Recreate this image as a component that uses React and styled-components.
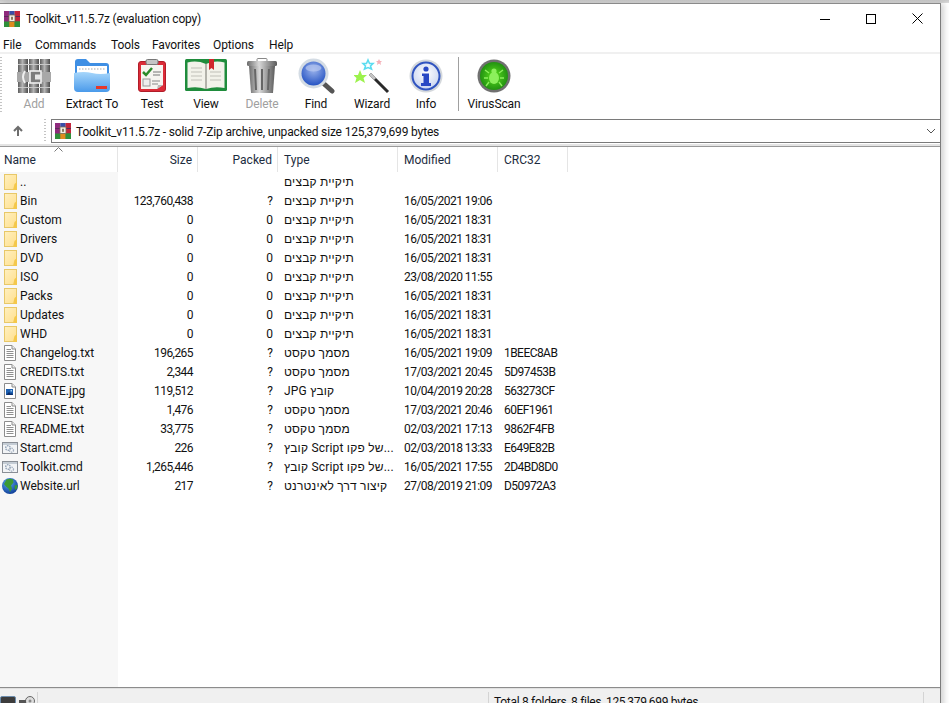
import React from 'react';
import styled, { createGlobalStyle } from 'styled-components';

const GlobalStyle = createGlobalStyle`
    html, body {
        margin: 0;
        height: 100%;
        overflow: hidden;
        background: #fff;
    }
    body {
        font-family: Roboto, "Liberation Sans", "DejaVu Sans", sans-serif;
        font-size: 12px;
        color: #111;
    }
`;

const COLUMNS = '118px 80px 80px 120px 100px 70px';

const rows = [
    { icon: 'folder', name: '..', type: 'תיקיית קבצים' },
    { icon: 'folder', name: 'Bin', size: '123,760,438', packed: '?', type: 'תיקיית קבצים', modified: '16/05/2021 19:06' },
    { icon: 'folder', name: 'Custom', size: '0', packed: '0', type: 'תיקיית קבצים', modified: '16/05/2021 18:31' },
    { icon: 'folder', name: 'Drivers', size: '0', packed: '0', type: 'תיקיית קבצים', modified: '16/05/2021 18:31' },
    { icon: 'folder', name: 'DVD', size: '0', packed: '0', type: 'תיקיית קבצים', modified: '16/05/2021 18:31' },
    { icon: 'folder', name: 'ISO', size: '0', packed: '0', type: 'תיקיית קבצים', modified: '23/08/2020 11:55' },
    { icon: 'folder', name: 'Packs', size: '0', packed: '0', type: 'תיקיית קבצים', modified: '16/05/2021 18:31' },
    { icon: 'folder', name: 'Updates', size: '0', packed: '0', type: 'תיקיית קבצים', modified: '16/05/2021 18:31' },
    { icon: 'folder', name: 'WHD', size: '0', packed: '0', type: 'תיקיית קבצים', modified: '16/05/2021 18:31' },
    { icon: 'text', name: 'Changelog.txt', size: '196,265', packed: '?', type: 'מסמך טקסט', modified: '16/05/2021 19:09', crc: '1BEEC8AB' },
    { icon: 'text', name: 'CREDITS.txt', size: '2,344', packed: '?', type: 'מסמך טקסט', modified: '17/03/2021 20:45', crc: '5D97453B' },
    { icon: 'image', name: 'DONATE.jpg', size: '119,512', packed: '?', type: 'קובץ JPG', modified: '10/04/2019 20:28', crc: '563273CF' },
    { icon: 'text', name: 'LICENSE.txt', size: '1,476', packed: '?', type: 'מסמך טקסט', modified: '17/03/2021 20:46', crc: '60EF1961' },
    { icon: 'text', name: 'README.txt', size: '33,775', packed: '?', type: 'מסמך טקסט', modified: '02/03/2021 17:13', crc: '9862F4FB' },
    { icon: 'cmd', name: 'Start.cmd', size: '226', packed: '?', type: '...של פקו Script קובץ', modified: '02/03/2018 13:33', crc: 'E649E82B' },
    { icon: 'cmd', name: 'Toolkit.cmd', size: '1,265,446', packed: '?', type: '...של פקו Script קובץ', modified: '16/05/2021 17:55', crc: '2D4BD8D0' },
    { icon: 'globe', name: 'Website.url', size: '217', packed: '?', type: 'קיצור דרך לאינטרנט', modified: '27/08/2019 21:09', crc: 'D50972A3' },
];

const menus = [
    { label: 'File', width: 32 },
    { label: 'Commands', width: 76 },
    { label: 'Tools', width: 41 },
    { label: 'Favorites', width: 61 },
    { label: 'Options', width: 56 },
    { label: 'Help', width: 40 },
];

function RarIcon({ size = 16 }) {
    return (
        <svg width={size} height={size} viewBox="0 0 16 16">
            <rect x="0" y="0" width="5.4" height="16" fill="#8e2a7c" />
            <rect x="5.3" y="0" width="5.4" height="16" fill="#3a4fa8" />
            <rect x="10.6" y="0" width="5.4" height="16" fill="#c2263c" />
            <rect x="0" y="10.5" width="16" height="5.5" fill="#2f8f3a" />
            <rect x="5.3" y="10.5" width="5.4" height="5.5" fill="#e08a1e" />
            <rect x="10.6" y="10.5" width="5.4" height="5.5" fill="#2f8f3a" />
            <rect x="0" y="5" width="16" height="1" fill="#5a2a5a" />
            <rect x="5" y="4" width="6" height="6.5" fill="#f4f0e6" stroke="#7a6a50" strokeWidth="0.8" />
            <rect x="7" y="5.8" width="2" height="3" fill="#8a7a60" />
        </svg>
    );
}

function FolderIcon() {
    return (
        <svg width="16" height="16" viewBox="0 0 16 16">
            <defs>
                <linearGradient id="folderYellow" x1="0" x2="1" y1="0" y2="1">
                    <stop offset="0" stopColor="#fff0c0" />
                    <stop offset="1" stopColor="#ffdf8c" />
                </linearGradient>
            </defs>
            <rect x="2.5" y="0.5" width="12" height="15" fill="url(#folderYellow)" stroke="#e8c868" />
            <path d="M12.5 10 L15 8 V16 H11 Z" fill="#f4c84c" />
        </svg>
    );
}

function TextIcon() {
    return (
        <svg width="16" height="16" viewBox="0 0 16 16">
            <path d="M2.5 0.5 H10 L13.5 4 V15.5 H2.5 Z" fill="#fff" stroke="#8c8c8c" />
            <path d="M10 0.5 V4 H13.5" fill="#eee" stroke="#8c8c8c" />
            <path d="M4.5 4.5 H9 M4.5 6.5 H11.5 M4.5 8.5 H11.5 M4.5 10.5 H11.5 M4.5 12.5 H11.5" stroke="#8f8f8f" />
        </svg>
    );
}

function ImageFileIcon() {
    return (
        <svg width="16" height="16" viewBox="0 0 16 16">
            <path d="M2.5 0.5 H10 L13.5 4 V15.5 H2.5 Z" fill="#fff" stroke="#8c8c8c" />
            <path d="M10 0.5 V4 H13.5" fill="#eee" stroke="#8c8c8c" />
            <rect x="4" y="6" width="7" height="6" fill="#1c5fb0" />
            <path d="M4 12 L7 9 L9 11 L10 10 L11 12 Z" fill="#0b2f6c" />
            <rect x="8.5" y="7" width="1.5" height="1.5" fill="#9fd0f5" />
        </svg>
    );
}

function CmdIcon() {
    return (
        <svg width="16" height="16" viewBox="0 0 16 16">
            <rect x="0.5" y="2.5" width="15" height="11" fill="#f2f4f6" stroke="#8a8f96" />
            <rect x="1" y="3" width="14" height="2" fill="#c4ccd4" />
            <circle cx="6" cy="8" r="2.3" fill="none" stroke="#94a4b8" strokeWidth="1.4" strokeDasharray="1.4 0.8" />
            <circle cx="9.5" cy="10.2" r="2" fill="none" stroke="#a4b0c0" strokeWidth="1.3" strokeDasharray="1.3 0.8" />
        </svg>
    );
}

function GlobeIcon() {
    return (
        <svg width="16" height="16" viewBox="0 0 16 16">
            <defs>
                <radialGradient id="globeSea" cx="40%" cy="30%" r="75%">
                    <stop offset="0" stopColor="#5aa8f4" />
                    <stop offset="1" stopColor="#0c3a94" />
                </radialGradient>
            </defs>
            <circle cx="8" cy="8" r="8" fill="url(#globeSea)" />
            <path d="M4.5 1.5 Q8.5 0 11 1.5 L11.5 4.5 L9 7.5 L10 10.5 L8 14 L6.5 10.5 L4 8.5 L2 6 Z" fill="#3c9a34" />
            <path d="M12.5 7.5 L15.5 7 L15 10.5 L13 12 Z" fill="#3c9a34" />
        </svg>
    );
}

const fileIcons = {
    folder: FolderIcon,
    text: TextIcon,
    image: ImageFileIcon,
    cmd: CmdIcon,
    globe: GlobeIcon,
};

function AddIcon() {
    return (
        <svg width="34" height="34" viewBox="0 0 34 34">
            <defs>
                <linearGradient id="bookGrey" x1="0" x2="1" y1="0" y2="0">
                    <stop offset="0" stopColor="#5c5c5c" />
                    <stop offset="0.45" stopColor="#b4b4b4" />
                    <stop offset="1" stopColor="#4c4c4c" />
                </linearGradient>
            </defs>
            <rect x="1" y="0" width="10" height="34" fill="url(#bookGrey)" />
            <rect x="12" y="0" width="10" height="34" fill="url(#bookGrey)" />
            <rect x="23" y="0" width="10" height="34" fill="url(#bookGrey)" />
            <path d="M1 5.5 H33 M1 28.5 H33" stroke="#c8c8c8" strokeWidth="1" />
            <rect x="0" y="13" width="34" height="10" fill="#a8a8a8" />
            <path d="M8 12 Q4 18 8 24" fill="none" stroke="#efefef" strokeWidth="2" />
            <rect x="13" y="12" width="11" height="12" fill="#7c7c7c" stroke="#efefef" strokeWidth="1.6" />
            <rect x="18" y="15.5" width="6" height="5" fill="#e6e6e6" />
        </svg>
    );
}

function ExtractIcon() {
    return (
        <svg width="36" height="35" viewBox="0 0 36 35">
            <defs>
                <linearGradient id="folderBlue" x1="0" x2="0" y1="0" y2="1">
                    <stop offset="0" stopColor="#a6d6fb" />
                    <stop offset="1" stopColor="#4a9aea" />
                </linearGradient>
            </defs>
            <path d="M1 4 Q1 1 4 1 H12 L16 5 H32 Q35 5 35 8 V16 H1 Z" fill="#3f8fe4" />
            <rect x="3" y="8" width="30" height="14" fill="#fff" />
            <path d="M5 11 H31" stroke="#a9a9a9" strokeDasharray="1.5 1.5" />
            <path d="M0 15 Q10 13 18 15 T36 15 V30 Q36 34 32 34 H4 Q0 34 0 30 Z" fill="url(#folderBlue)" />
            <rect x="22" y="28" width="11" height="3" fill="#e5382a" />
        </svg>
    );
}

function TestIcon() {
    return (
        <svg width="28" height="33" viewBox="0 0 28 33">
            <rect x="0.5" y="2.5" width="27" height="30" rx="2.5" fill="#dc2c38" stroke="#b01c28" />
            <path d="M3 6 H25 V26 L19 30 H3 Z" fill="#f6f4f0" />
            <path d="M19 30 L25 26 H20 Z" fill="#b8b8b8" />
            <rect x="8" y="0.5" width="12" height="5" rx="1.5" fill="#c4c4c4" stroke="#777" />
            <path d="M5 13 L8 16 L14 9" fill="none" stroke="#2a8a2a" strokeWidth="2.5" />
            <path d="M15 13 H23 M15 16 H22" stroke="#777" />
            <rect x="5" y="20" width="7" height="7" fill="#eee" stroke="#999" />
            <path d="M14 22 H22 M14 25 H20" stroke="#888" />
        </svg>
    );
}

function ViewIcon() {
    return (
        <svg width="42" height="33" viewBox="0 0 42 33">
            <rect x="0" y="0" width="42" height="32" rx="1.5" fill="#1f8c3c" />
            <path d="M2.5 3.5 Q12 1 21 5 Q30 1 39.5 3.5 V29 Q30 27 21 30 Q12 27 2.5 29 Z" fill="#f2f2ea" />
            <path d="M21 5 V30" stroke="#9c9c94" strokeWidth="1.5" />
            <path d="M6 9 H17 M6 13 H17 M6 17 H17 M6 21 H17 M25 13 H36 M25 17 H36 M25 21 H36" stroke="#c0c0b8" />
            <path d="M24 0 H29 V11 L26.5 9 L24 11 Z" fill="#d0262c" />
        </svg>
    );
}

function DeleteIcon() {
    return (
        <svg width="30" height="35" viewBox="0 0 30 35">
            <defs>
                <linearGradient id="binGrey" x1="0" x2="1" y1="0" y2="0">
                    <stop offset="0" stopColor="#6c6c6c" />
                    <stop offset="0.4" stopColor="#d8d8d8" />
                    <stop offset="1" stopColor="#5c5c5c" />
                </linearGradient>
            </defs>
            <rect x="10" y="0.5" width="10" height="3" rx="1" fill="none" stroke="#888" />
            <rect x="0" y="3" width="30" height="5" rx="1.5" fill="url(#binGrey)" />
            <path d="M2 8 H28 L26 35 H4 Z" fill="url(#binGrey)" />
            <path d="M8 11 L9 32 M15 11 V32 M22 11 L21 32" stroke="#666" strokeWidth="2" />
        </svg>
    );
}

function FindIcon() {
    return (
        <svg width="37" height="36" viewBox="0 0 37 36">
            <defs>
                <radialGradient id="lensBlue" cx="50%" cy="35%" r="70%">
                    <stop offset="0" stopColor="#9cb4ec" />
                    <stop offset="1" stopColor="#1c4cc0" />
                </radialGradient>
            </defs>
            <path d="M24 24 L34 33" stroke="#555" strokeWidth="5" strokeLinecap="round" />
            <circle cx="15.5" cy="15.5" r="15" fill="#d4dce4" />
            <circle cx="15.5" cy="15.5" r="12" fill="url(#lensBlue)" />
            <ellipse cx="15.5" cy="10" rx="8" ry="3.5" fill="#b8c8f0" opacity="0.7" />
        </svg>
    );
}

function WizardIcon() {
    return (
        <svg width="36" height="36" viewBox="0 0 36 36">
            <path d="M16 16 L34 34" stroke="#2a2a2a" strokeWidth="3" />
            <path d="M16 16 L21 21" stroke="#c4c4c4" strokeWidth="3" />
            <path d="M6 12 L8 17 L13 17 L9.5 20 L11 25 L6 22 L1 25 L2.5 20 L-1 17 L4 17 Z" fill="#9cf24c" />
            <path d="M14 2 L15.5 5.5 L19 5.5 L16.5 8 L17.5 11 L14 9.5 L10.5 11 L11.5 8 L9 5.5 L12.5 5.5 Z" fill="none" stroke="#5cdcf0" strokeWidth="1.6" />
            <path d="M25 1 L26 3 L28 3 L26.5 4.5 L27 7 L25 5.5 L23 7 L23.5 4.5 L22 3 L24 3 Z" fill="#f4b0b8" />
        </svg>
    );
}

function InfoIcon() {
    return (
        <svg width="34" height="34" viewBox="0 0 34 34">
            <defs>
                <radialGradient id="infoFace" cx="50%" cy="40%" r="60%">
                    <stop offset="0" stopColor="#fff" />
                    <stop offset="1" stopColor="#c8d4f0" />
                </radialGradient>
            </defs>
            <circle cx="17" cy="17" r="16.5" fill="#d4d8dc" />
            <circle cx="17" cy="17" r="13.5" fill="url(#infoFace)" stroke="#3054c0" strokeWidth="2" />
            <circle cx="17" cy="10" r="2.6" fill="#2848c4" />
            <path d="M13 14.5 H20 V24 H22 V27 H12 V24 H14.5 V17 H13 Z" fill="#2848c4" />
        </svg>
    );
}

function VirusIcon() {
    return (
        <svg width="34" height="34" viewBox="0 0 34 34">
            <defs>
                <radialGradient id="virusGreen" cx="50%" cy="50%" r="55%">
                    <stop offset="0" stopColor="#5ce01c" />
                    <stop offset="1" stopColor="#1c8a10" />
                </radialGradient>
            </defs>
            <circle cx="17" cy="17" r="16.5" fill="#707070" />
            <circle cx="17" cy="17" r="14" fill="url(#virusGreen)" />
            <ellipse cx="17" cy="19" rx="5" ry="6" fill="#8cf05c" />
            <circle cx="17" cy="12" r="2.6" fill="#8cf05c" />
            <path d="M12 14 L8 11 M22 14 L26 11 M11 19 H7 M23 19 H27 M12 23 L9 27 M22 23 L25 27" stroke="#8cf05c" strokeWidth="1.4" />
        </svg>
    );
}

function UpArrow() {
    return (
        <svg width="12" height="12" viewBox="0 0 12 12">
            <path d="M6 11 V2 M2 6 L6 2 L10 6" fill="none" stroke="#6d6d6d" strokeWidth="2" />
        </svg>
    );
}

const tools = [
    { label: 'Add', width: 50, disabled: true, Icon: AddIcon },
    { label: 'Extract To', width: 66, Icon: ExtractIcon },
    { label: 'Test', width: 54, Icon: TestIcon },
    { label: 'View', width: 54, Icon: ViewIcon },
    { label: 'Delete', width: 58, disabled: true, Icon: DeleteIcon },
    { label: 'Find', width: 50, Icon: FindIcon },
    { label: 'Wizard', width: 62, Icon: WizardIcon },
    { label: 'Info', width: 46, Icon: InfoIcon },
];

function App() {
    return (
        <>
            <GlobalStyle />
            <Desktop>
                <Window>
                    <TitleBar>
                        <TitleLeft>
                            <RarIcon />
                            <TitleText>Toolkit_v11.5.7z (evaluation copy)</TitleText>
                        </TitleLeft>
                        <WindowButtons>
                            <WindowButton>
                                <svg width="10" height="10" viewBox="0 0 10 10"><path d="M0 5.5 H10" stroke="#000" /></svg>
                            </WindowButton>
                            <WindowButton>
                                <svg width="10" height="10" viewBox="0 0 10 10"><rect x="0.5" y="0.5" width="9" height="9" fill="none" stroke="#000" /></svg>
                            </WindowButton>
                            <WindowButton>
                                <svg width="11" height="11" viewBox="0 0 11 11"><path d="M0.5 0.5 L10.5 10.5 M10.5 0.5 L0.5 10.5" stroke="#000" /></svg>
                            </WindowButton>
                        </WindowButtons>
                    </TitleBar>

                    <MenuBar>
                        {menus.map(({ label, width }) => (
                            <MenuItem key={label} $width={width}>{label}</MenuItem>
                        ))}
                    </MenuBar>

                    <Toolbar>
                        <Grip />
                        {tools.map(({ label, width, disabled, Icon }) => (
                            <ToolButton key={label} $width={width} $disabled={disabled}>
                                <ToolIconSlot><Icon /></ToolIconSlot>
                                <span>{label}</span>
                            </ToolButton>
                        ))}
                        <ToolSeparator />
                        <ToolButton $width={52}>
                            <ToolIconSlot><VirusIcon /></ToolIconSlot>
                            <span>VirusScan</span>
                        </ToolButton>
                    </Toolbar>

                    <AddressRow>
                        <UpSlot><UpArrow /></UpSlot>
                        <AddressGrip />
                        <AddressBox>
                            <RarIcon />
                            <AddressText>Toolkit_v11.5.7z - solid 7-Zip archive, unpacked size 125,379,699 bytes</AddressText>
                            <Chevron>
                                <svg width="10" height="6" viewBox="0 0 10 6"><path d="M1 1 L5 5 L9 1" fill="none" stroke="#555" /></svg>
                            </Chevron>
                        </AddressBox>
                    </AddressRow>

                    <ListPane>
                        <HeaderRow>
                            <HeaderCell>
                                Name
                                <SortCaret>
                                    <svg width="9" height="5" viewBox="0 0 9 5"><path d="M0.5 4.5 L4.5 0.5 L8.5 4.5" fill="none" stroke="#777" /></svg>
                                </SortCaret>
                            </HeaderCell>
                            <HeaderCell $right>Size</HeaderCell>
                            <HeaderCell $right>Packed</HeaderCell>
                            <HeaderCell>Type</HeaderCell>
                            <HeaderCell>Modified</HeaderCell>
                            <HeaderCell>CRC32</HeaderCell>
                        </HeaderRow>
                        <ListBody>
                            {rows.map((row) => {
                                const Icon = fileIcons[row.icon];
                                return (
                                    <Row key={row.name}>
                                        <NameCell>
                                            <IconSlot><Icon /></IconSlot>
                                            <NameText>{row.name}</NameText>
                                        </NameCell>
                                        <Cell $right $numeric>{row.size}</Cell>
                                        <Cell $right>{row.packed}</Cell>
                                        <Cell><TypeText dir="rtl">{row.type}</TypeText></Cell>
                                        <Cell $numeric>{row.modified}</Cell>
                                        <Cell $numeric>{row.crc}</Cell>
                                    </Row>
                                );
                            })}
                        </ListBody>
                    </ListPane>

                    <StatusBar>
                        <StatusIcons>
                            <svg width="16" height="10" viewBox="0 0 16 10">
                                <rect x="0.5" y="0.5" width="15" height="9" rx="1.5" fill="#3c3c3c" stroke="#6c8cac" />
                            </svg>
                            <svg width="16" height="10" viewBox="0 0 16 10">
                                <circle cx="11" cy="5" r="4.5" fill="#ddd" stroke="#666" />
                                <circle cx="11" cy="5" r="1.5" fill="#888" />
                                <rect x="0" y="4" width="7" height="3" fill="#555" />
                            </svg>
                        </StatusIcons>
                        <StatusSpacer />
                        <StatusTotal>Total 8 folders, 8 files, 125,379,699 bytes</StatusTotal>
                        <StatusEnd />
                    </StatusBar>
                </Window>
            </Desktop>
        </>
    );
}

const Desktop = styled.div`
    height: 703px;
    width: 949px;
    box-sizing: border-box;
    padding-top: 3px;
    overflow: hidden;
    background: linear-gradient(#c8c8c8, #dcdcdc 3px, #fff 3px);
`;

const Window = styled.div`
    width: 941px;
    height: 724px;
    box-sizing: border-box;
    display: flex;
    flex-direction: column;
    background: #fff;
    border-top: 1px solid #8a8a8a;
    border-right: 1px solid #7c7c7c;
    box-shadow: 3px 0 6px rgba(0, 0, 0, 0.18);
`;

const TitleBar = styled.div`
    height: 29px;
    flex: none;
    display: flex;
    align-items: center;
    justify-content: space-between;
`;

const TitleLeft = styled.div`
    display: flex;
    align-items: center;
    gap: 6px;
    padding-left: 4px;
`;

const TitleText = styled.span`
    font-size: 12px;
    color: #111;
    letter-spacing: -0.18px;
    padding-top: 1px;
`;

const WindowButtons = styled.div`
    display: flex;
`;

const WindowButton = styled.div`
    width: 46px;
    height: 29px;
    display: flex;
    align-items: center;
    justify-content: center;
`;

const MenuBar = styled.div`
    height: 19px;
    flex: none;
    box-sizing: border-box;
    padding: 4px 0 0 3px;
    display: flex;
    align-items: center;
`;

const MenuItem = styled.span`
    width: ${(props) => props.$width}px;
    flex: none;
    letter-spacing: -0.1px;
`;

const Toolbar = styled.div`
    height: 64px;
    flex: none;
    display: flex;
    box-sizing: border-box;
    border-top: 2px solid #f0f0f0;
    padding-top: 3px;
`;

const Grip = styled.div`
    width: 2px;
    margin-right: 7px;
    margin-bottom: 2px;
    background: repeating-linear-gradient(#c4c4c4 0 1px, transparent 1px 3px);
`;

const ToolButton = styled.div`
    width: ${(props) => props.$width}px;
    flex: none;
    display: flex;
    flex-direction: column;
    align-items: center;
    color: ${(props) => (props.$disabled ? '#a0a0a0' : '#111')};
    white-space: nowrap;
    letter-spacing: -0.1px;
`;

const ToolIconSlot = styled.div`
    height: 37px;
    display: flex;
    align-items: center;
    justify-content: center;
    margin-bottom: 3px;
`;

const ToolSeparator = styled.div`
    width: 1px;
    height: 54px;
    background: #a0a0a0;
    margin: 0 9px 0 9px;
`;

const AddressRow = styled.div`
    height: 30px;
    flex: none;
    display: flex;
    align-items: flex-start;
    box-sizing: border-box;
    border-bottom: 2px solid #e4e4e4;
    padding-top: 3px;
`;

const UpSlot = styled.div`
    width: 36px;
    height: 24px;
    display: flex;
    align-items: center;
    justify-content: center;
`;

const AddressGrip = styled.div`
    width: 2px;
    height: 24px;
    margin: 0 5px 0 8px;
    background: repeating-linear-gradient(#c4c4c4 0 1px, transparent 1px 3px);
`;

const AddressBox = styled.div`
    flex: 1;
    height: 24px;
    box-sizing: border-box;
    display: flex;
    align-items: center;
    gap: 5px;
    padding-left: 3px;
    border: 1px solid #7a7a7a;
    border-right-width: 0;
`;

const AddressText = styled.span`
    flex: 1;
    padding-top: 1px;
    letter-spacing: -0.16px;
`;

const Chevron = styled.span`
    display: flex;
    padding-right: 4px;
`;

const ListPane = styled.div`
    flex: 1;
    min-height: 0;
    display: flex;
    flex-direction: column;
    border-top: 1px solid #9a9a9a;
`;

const HeaderRow = styled.div`
    display: grid;
    grid-template-columns: ${COLUMNS};
    height: 25px;
    flex: none;
`;

const HeaderCell = styled.div`
    position: relative;
    display: flex;
    align-items: center;
    justify-content: ${(props) => (props.$right ? 'flex-end' : 'flex-start')};
    padding: 0 5px 0 ${(props) => (props.$right ? '0' : '6px')};
    border-right: 1px solid #e5e5e5;
    color: #1c2c3e;
    &:first-child {
        padding-left: 4px;
    }
`;

const SortCaret = styled.span`
    position: absolute;
    left: 54px;
    top: 0;
    display: flex;
`;

const ListBody = styled.div`
    flex: 1;
    min-height: 0;
    background: linear-gradient(90deg, #f7f7f7 118px, #fff 118px);
`;

const Row = styled.div`
    display: grid;
    grid-template-columns: ${COLUMNS};
    height: 19px;
    line-height: 19px;
`;

const Cell = styled.div`
    padding: 1px 5px 0 6px;
    text-align: ${(props) => (props.$right ? 'right' : 'left')};
    letter-spacing: ${(props) => (props.$numeric ? '-0.55px' : '0')};
    white-space: nowrap;
`;

const NameCell = styled.div`
    display: flex;
    align-items: center;
    gap: 2px;
    padding-left: 2px;
`;

const NameText = styled.span`
    padding-top: 1px;
`;

const IconSlot = styled.span`
    display: flex;
    width: 16px;
    height: 16px;
    flex: none;
`;

const TypeText = styled.span`
    display: inline-block;
    letter-spacing: 0.2px;
`;

const StatusBar = styled.div`
    height: 40px;
    flex: none;
    display: flex;
    box-sizing: border-box;
    border-top: 1px solid #8c8c8c;
    box-shadow: inset 0 1px 0 #e0e0e0;
    background: #f0f0f0;
    padding-top: 4px;
`;

const StatusIcons = styled.div`
    width: 37px;
    display: flex;
    gap: 3px;
    padding-top: 4px;
    align-items: flex-start;
    border-right: 1px solid #d4d4d4;
`;

const StatusSpacer = styled.div`
    width: 450px;
    border-right: 1px solid #d4d4d4;
`;

const StatusTotal = styled.div`
    width: 435px;
    padding: 3px 0 0 5px;
    box-sizing: border-box;
    border-right: 1px solid #d4d4d4;
    white-space: nowrap;
    letter-spacing: -0.3px;
`;

const StatusEnd = styled.div`
    flex: 1;
`;

export default App;
